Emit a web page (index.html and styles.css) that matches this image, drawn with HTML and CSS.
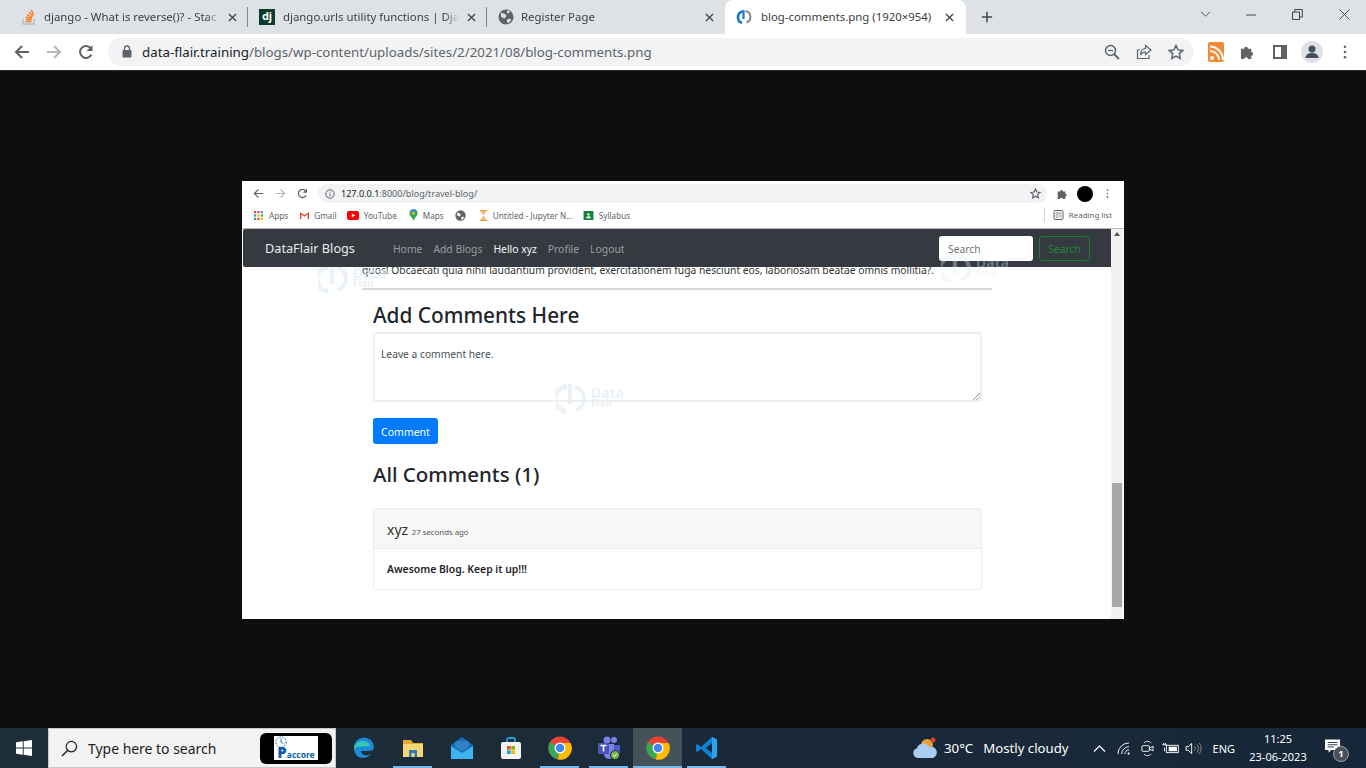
FILE: index.html
```html
<!DOCTYPE html>
<html lang="en">
<head>
<meta charset="utf-8">
<title>blog-comments.png (1920×954)</title>
<link rel="stylesheet" href="styles.css">
</head>
<body>
<div class="tabstrip">
  <div class="tab t1">
    <svg class="fav" viewBox="0 0 16 16"><path d="M2 10v5h11v-5" fill="none" stroke="#bcbbbb" stroke-width="1.4"/><path d="M4.5 12.5h6M4.6 10.3l6 .6M5 8l5.8 1.6M6 5.6l5.2 2.9M8 3l4 4.300M10.300 1l2.500 5" stroke="#f48024" stroke-width="1.400" fill="none"/></svg>
    <span class="tabtitle">django - What is reverse()? - Stac</span>
    <span class="tabx"><svg viewBox="0 0 10 10"><path d="M1 1l8 8M9 1l-8 8"/></svg></span>
  </div>
  <div class="tab t2">
    <span class="djicon">dj</span>
    <span class="tabtitle">django.urls utility functions | Djan</span>
    <span class="tabx"><svg viewBox="0 0 10 10"><path d="M1 1l8 8M9 1l-8 8"/></svg></span>
  </div>
  <div class="tab t3">
    <svg class="fav" viewBox="0 0 16 16"><circle cx="8" cy="8" r="7.500" fill="#5f6368"/><path d="M3 3.500l4 1.500 1.500 2-2 2.500-1-.2L3 7.500zM9 10.500l3.500-1 .5 2-2.500 2.500-1.500-1zM9 1.500l3 1-1.500 2-1.500-.5z" fill="#dee1e6"/></svg>
    <span class="tabtitle">Register Page</span>
    <span class="tabx"><svg viewBox="0 0 10 10"><path d="M1 1l8 8M9 1l-8 8"/></svg></span>
  </div>
  <div class="tab active">
    <svg class="fav" viewBox="0 0 16 16"><path d="M6.500 2.500A6 6 0 0 0 6 14" fill="none" stroke="#1976c8" stroke-width="2.600"/><path d="M7.500 1v9" stroke="#1976c8" stroke-width="2.200"/><path d="M9.500 2a6 6 0 0 1 1 11.500" fill="none" stroke="#8a8f96" stroke-width="2.200"/></svg>
    <span class="tabtitle">blog-comments.png (1920×954)</span>
    <span class="tabx"><svg viewBox="0 0 10 10"><path d="M1 1l8 8M9 1l-8 8"/></svg></span>
  </div>
  <svg class="newtab" viewBox="0 0 14 14"><path d="M7 1v12M1 7h12"/></svg>
  <div class="winctl">
    <svg class="wc-chev" viewBox="0 0 12 8"><path d="M1 1l5 5 5-5"/></svg>
    <svg class="wc-min" viewBox="0 0 12 2"><path d="M0 1h11"/></svg>
    <svg class="wc-max" viewBox="0 0 11 11"><path d="M.5 3h7v7.500h-7zM2.800 3V.5h7.500v7.500H7.500"/></svg>
    <svg class="wc-close" viewBox="0 0 12 12"><path d="M.5.5l11 11M11.500.5l-11 11"/></svg>
  </div>
</div>
<div class="toolbar">
  <svg class="nav-ic" viewBox="0 0 16 16"><path d="M15 8H2M8 2L2 8l6 6" fill="none" stroke="#5f6368" stroke-width="2"/></svg>
  <svg class="nav-ic" viewBox="0 0 16 16"><path d="M1 8h13M8 2l6 6-6 6" fill="none" stroke="#b4b7ba" stroke-width="2"/></svg>
  <svg class="nav-ic" viewBox="0 0 16 16"><path d="M13.500 10.500A6 6 0 1 1 13 4.500" fill="none" stroke="#5f6368" stroke-width="2"/><path d="M14.500 1v6h-6z" fill="#5f6368"/></svg>
  <div class="omni">
    <svg class="lock" viewBox="0 0 10 13"><path d="M2.500 5V3.500a2.500 2.500 0 0 1 5 0V5" fill="none" stroke="#5f6368" stroke-width="1.300"/><rect x="0.500" y="5" width="9" height="7.500" rx="1" fill="#5f6368"/></svg>
    <span class="url"><b>data-flair.training</b>/blogs/wp-content/uploads/sites/2/2021/08/blog-comments.png</span>
    <span class="omni-right">
      <svg class="ic16" viewBox="0 0 16 16"><circle cx="6.500" cy="6.500" r="5" fill="none" stroke="#5f6368" stroke-width="1.500"/><path d="M10 10l5 5" stroke="#5f6368" stroke-width="1.800"/><path d="M4 6.500h5" stroke="#5f6368" stroke-width="1.300"/></svg>
      <svg class="ic16" viewBox="0 0 16 16"><path d="M4 6H1.500v8.500H13V11" fill="none" stroke="#5f6368" stroke-width="1.200"/><path d="M9.500 1.500L15 6l-5.500 4.500V8C7 8 5.500 9 4.500 11c0-4 2-6.500 5-6.500z" fill="none" stroke="#5f6368" stroke-width="1.200"/></svg>
      <svg class="ic16" viewBox="0 0 16 16"><path d="M8 1.500l2 4.400 4.800.5-3.600 3.200 1 4.700L8 12l-4.200 2.300 1-4.700L1.200 6.400 6 5.900z" fill="none" stroke="#5f6368" stroke-width="1.500"/></svg>
    </span>
  </div>
  <span class="ext-group">
    <svg class="rss" viewBox="0 0 16 20"><rect width="16" height="20" rx="2" fill="#f08a35"/><circle cx="4" cy="16" r="2" fill="#fff"/><path d="M2 9a9 9 0 0 1 9 9M2 4.500A13.500 13.500 0 0 1 15 18" fill="none" stroke="#fff" stroke-width="2"/></svg>
    <svg class="puzzle" viewBox="0 0 16 16"><path d="M1 5h3.500a2 2 0 1 1 4 0H12v3.500a2 2 0 1 1 0 4V16H8.500a2 2 0 1 0-4 0H1z" fill="#5f6368"/></svg>
    <svg class="side" viewBox="0 0 14 14"><rect x="1" y="1" width="12" height="12" fill="none" stroke="#5f6368" stroke-width="2"/><rect x="8" y="1" width="5" height="12" fill="#5f6368"/></svg>
    <span class="avatar"><svg viewBox="0 0 22 22"><circle cx="11" cy="8" r="3.500" fill="#474f5d"/><path d="M4.500 17c0-3.500 3-5 6.500-5s6.500 1.500 6.500 5z" fill="#474f5d"/></svg></span>
    <svg class="kebab" viewBox="0 0 4 16"><circle cx="2" cy="2" r="1.500"/><circle cx="2" cy="8" r="1.500"/><circle cx="2" cy="14" r="1.500"/></svg>
  </span>
</div>
<main class="viewer">
  <div class="shot">
    <div class="in-toolbar">
      <svg class="in-nav" viewBox="0 0 16 16"><path d="M15 8H2M8 2L2 8l6 6" fill="none" stroke="#5f6368" stroke-width="1.800"/></svg>
      <svg class="in-nav" viewBox="0 0 16 16"><path d="M1 8h13M8 2l6 6-6 6" fill="none" stroke="#b4b7ba" stroke-width="1.800"/></svg>
      <svg class="in-nav" viewBox="0 0 16 16"><path d="M13.500 10.500A6 6 0 1 1 13 4.500" fill="none" stroke="#5f6368" stroke-width="1.800"/><path d="M14.500 1v6h-6z" fill="#5f6368"/></svg>
      <div class="in-omni">
        <svg class="in-info" viewBox="0 0 10 10"><circle cx="5" cy="5" r="4.200" fill="none" stroke="#5f6368"/><path d="M5 4.500V7.500M5 2.500v1" stroke="#5f6368"/></svg>
        <span class="in-url"><b>127.0.0.1</b>:8000/blog/travel-blog/</span>
        <svg class="in-star" viewBox="0 0 16 16"><path d="M8 1.500l2 4.400 4.800.5-3.600 3.200 1 4.700L8 12l-4.200 2.300 1-4.700L1.200 6.400 6 5.900z" fill="none" stroke="#5f6368" stroke-width="1.700"/></svg>
      </div>
      <svg class="in-puzzle" viewBox="0 0 16 16"><path d="M1 5h3.500a2 2 0 1 1 4 0H12v3.500a2 2 0 1 1 0 4V16H8.500a2 2 0 1 0-4 0H1z" fill="#5f6368"/></svg>
      <span class="in-avatar"></span>
      <svg class="in-kebab" viewBox="0 0 4 16"><circle cx="2" cy="2" r="1.500"/><circle cx="2" cy="8" r="1.500"/><circle cx="2" cy="14" r="1.500"/></svg>
    </div>
    <div class="bookmarks">
      <span class="bm bm-apps"><svg class="bm-ic" viewBox="0 0 9 9"><g fill="#ea4335"><rect width="2.200" height="2.200"/><rect x="3.400" width="2.200" height="2.200"/></g><rect x="6.800" width="2.200" height="2.200" fill="#4285f4"/><rect y="3.400" width="2.200" height="2.200" fill="#4285f4"/><rect x="3.400" y="3.400" width="2.200" height="2.200" fill="#fbbc05"/><rect x="6.800" y="3.400" width="2.200" height="2.200" fill="#34a853"/><rect y="6.800" width="2.200" height="2.200" fill="#34a853"/><rect x="3.400" y="6.800" width="2.200" height="2.200" fill="#ea4335"/><rect x="6.800" y="6.800" width="2.200" height="2.200" fill="#fbbc05"/></svg>Apps</span>
      <span class="bm bm-gmail"><svg class="bm-ic" viewBox="0 0 10 8"><path d="M.8 8V1.500L5 4.500l4.200-3V8" fill="none" stroke="#ea4335" stroke-width="1.500"/></svg>Gmail</span>
      <span class="bm bm-yt"><svg class="bm-ic wide" viewBox="0 0 12 9"><rect width="12" height="9" rx="2" fill="#f00"/><path d="M4.800 2.500v4l3.400-2z" fill="#fff"/></svg>YouTube</span>
      <span class="bm bm-maps"><svg class="bm-ic" viewBox="0 0 10 13"><path d="M5 0a4.500 4.500 0 0 1 4.500 4.500C9.500 7.500 6 9.500 5 13 4 9.500.5 7.500.5 4.500A4.500 4.500 0 0 1 5 0z" fill="#34a853"/><path d="M1 3a4.500 4.500 0 0 1 7-2L5 4.500z" fill="#4285f4"/><circle cx="5" cy="4.500" r="1.500" fill="#fbbc05"/></svg>Maps</span>
      <span class="bm bm-globe"><svg class="bm-ic" viewBox="0 0 16 16"><circle cx="8" cy="8" r="7.500" fill="#5f6368"/><path d="M3 3.500l4 1.500 1.500 2-2 2.500-1-.2L3 7.500zM9 10.500l3.500-1 .5 2-2.500 2.500-1.500-1z" fill="#fff"/></svg></span>
      <span class="bm bm-jup"><svg class="bm-ic" viewBox="0 0 10 12"><path d="M1 .7h8M1 11.300h8" stroke="#f39a3c" stroke-width="1.400"/><path d="M2 1h6L5 6l3 5H2l3-5z" fill="#f7b267"/></svg>Untitled - Jupyter N...</span>
      <span class="bm bm-syl"><svg class="bm-ic" viewBox="0 0 11 10"><rect width="11" height="10" fill="#188038"/><circle cx="5.500" cy="3.800" r="1.300" fill="#fff"/><path d="M2.800 8c0-1.500 1.200-2.200 2.700-2.200S8.200 6.500 8.200 8z" fill="#fff"/></svg>Syllabus</span>
      <span class="bm bm-read"><svg class="bm-ic" viewBox="0 0 10 10"><rect x=".5" y=".5" width="9" height="9" rx="1" fill="none" stroke="#5f6368"/><path d="M2 3h6M2 5h3M6 5h2M2 7h3M6 7h2" stroke="#5f6368" stroke-width=".8"/></svg>Reading list</span>
    </div>
    <div class="site">
      <div class="site-main">
        <nav class="navbar">
          <span class="brand">DataFlair Blogs</span>
          <span class="navlinks">
            <a>Home</a><a>Add Blogs</a><a class="on">Hello xyz</a><a>Profile</a><a>Logout</a>
          </span>
          <span class="navsearch">
            <span class="searchbox">Search</span>
            <span class="searchbtn">Search</span>
          </span>
        </nav>
        <div class="content">
          <p class="clipped">quos! Obcaecati quia nihil laudantium provident, exercitationem fuga nesciunt eos, laboriosam beatae omnis mollitia?.</p>
          <div class="rule"></div>
          <section class="col">
            <h2 class="h-add">Add Comments Here</h2>
            <div class="textarea">Leave a comment here.<svg class="grip" viewBox="0 0 8 8"><path d="M1 8l7-7M4.500 8L8 4.500" stroke="#777" stroke-width=".8"/></svg></div>
            <span class="btn">Comment</span>
            <h2 class="h-all">All Comments (1)</h2>
            <div class="card">
              <div class="card-head"><span class="who">xyz</span> <small>27 seconds ago</small></div>
              <div class="card-body">Awesome Blog. Keep it up!!!</div>
            </div>
          </section>
        </div>
        <div class="wm wm-a"><svg viewBox="0 0 30 34"><path d="M11 6A12 12 0 0 0 10 30" fill="none" stroke="currentColor" stroke-width="5"/><path d="M14 3v20" stroke="currentColor" stroke-width="4"/><path d="M19 6a12 12 0 0 1 1 23" fill="none" stroke="currentColor" stroke-width="4"/></svg><span class="wm-txt"><i>Data</i><i>Flair</i></span></div>
        <div class="wm wm-b"><svg viewBox="0 0 30 34"><path d="M11 6A12 12 0 0 0 10 30" fill="none" stroke="currentColor" stroke-width="5"/><path d="M14 3v20" stroke="currentColor" stroke-width="4"/><path d="M19 6a12 12 0 0 1 1 23" fill="none" stroke="currentColor" stroke-width="4"/></svg><span class="wm-txt"><i>Data</i><i>Flair</i></span></div>
        <div class="wm wm-c"><svg viewBox="0 0 30 34"><path d="M11 6A12 12 0 0 0 10 30" fill="none" stroke="currentColor" stroke-width="5"/><path d="M14 3v20" stroke="currentColor" stroke-width="4"/><path d="M19 6a12 12 0 0 1 1 23" fill="none" stroke="currentColor" stroke-width="4"/></svg><span class="wm-txt"><i>Data</i><i>Flair</i></span></div>
      </div>
      <div class="scrollbar"><span class="sb-up"></span><span class="sb-thumb"></span></div>
    </div>
  </div>
</main>
<footer class="taskbar">
  <svg class="winlogo" viewBox="0 0 16 16"><path d="M0 2.300l6.800-1v6.200H0zM7.700 1.200L16 0v7.500H7.700zM0 8.500h6.800v6.200l-6.800-1zM7.700 8.500H16V16l-8.300-1.200z" fill="#fff"/></svg>
  <div class="tsearch">
    <svg class="mag" viewBox="0 0 18 18"><circle cx="11" cy="7" r="5.500" fill="none" stroke="#222" stroke-width="1.300"/><path d="M7 11l-6 6" stroke="#222" stroke-width="1.500"/></svg>
    <span class="tsearch-txt">Type here to search</span>
    <span class="pac"><span class="pac-in"><svg class="pac-dial" viewBox="0 0 14 14"><circle cx="7" cy="7" r="6" fill="none" stroke="#0d5ea8" stroke-dasharray="2 1.200"/><path d="M7 3v4l3 2" fill="none" stroke="#0d5ea8"/></svg><b>P</b>accore</span></span>
  </div>
  <div class="apps">
    <span class="app"><svg viewBox="0 0 24 24"><path d="M2 12a10 10 0 0 1 20-1c0 3-2.500 4-5 4H9c0 3 3 5 7 4 1-.2 2-.7 3-1.300-2 3-5 4.300-8 4.300-5 0-9-4-9-10z" fill="#1a8bd8"/><path d="M2 12C3 7 7 5 11 5c4 0 7 2.500 7 5.500H8C5 10.500 3 12 2 14z" fill="#37c6b0"/></svg></span>
    <span class="app under"><svg viewBox="0 0 24 24"><path d="M2 4h8l2 3h10v14H2z" fill="#e8a92a"/><path d="M2 8h20v13H2z" fill="#f7d674"/><path d="M8 21v-7h8v7h-2.500v-4h-3v4z" fill="#2b7bc0"/></svg></span>
    <span class="app"><svg viewBox="0 0 24 24"><path d="M1 9l11-8 11 8v14H1z" fill="#0f6cbd"/><path d="M1 10l11 7 11-7v13H1z" fill="#3fb2f0"/><path d="M5 5h14v6l-7 4-7-4z" fill="#fff" opacity=".15"/></svg></span>
    <span class="app"><svg viewBox="0 0 24 24"><path d="M8 7V4a2 2 0 0 1 2-2h4a2 2 0 0 1 2 2v3" fill="none" stroke="#21a0dc" stroke-width="1.800"/><rect x="2" y="6" width="20" height="17" rx="2" fill="#f4f4f4"/><rect x="8" y="10" width="3.700" height="3.700" fill="#f25022"/><rect x="12.300" y="10" width="3.700" height="3.700" fill="#7fba00"/><rect x="8" y="14.300" width="3.700" height="3.700" fill="#00a4ef"/><rect x="12.300" y="14.300" width="3.700" height="3.700" fill="#ffb900"/></svg></span>
    <span class="app under"><svg viewBox="0 0 24 24"><use href="#chrome"/></svg></span>
    <span class="app under"><svg viewBox="0 0 24 24"><circle cx="17" cy="4" r="3" fill="#7b83eb"/><circle cx="10" cy="4" r="3.500" fill="#7b83eb"/><path d="M13 9h10v8a4 4 0 0 1-8 0z" fill="#5059c9"/><path d="M7 8h10v10a5 5 0 0 1-10 0z" fill="#7b83eb"/><rect x="1" y="7" width="11" height="11" rx="1" fill="#4b53bc"/><path d="M3.500 9.500h6M6.500 9.500v6" stroke="#fff" stroke-width="1.500"/><circle cx="18" cy="19" r="4.500" fill="#7ab648" stroke="#1b2a35"/><path d="M16 19l1.500 1.500 2.500-3" fill="none" stroke="#fff"/></svg></span>
    <span class="app cur under"><svg viewBox="0 0 24 24"><use href="#chrome"/></svg></span>
    <span class="app under"><svg viewBox="0 0 24 24"><path d="M17 1l5 2.500v17L17 23 6 13l-3.500 3L1 15v-6l1.500-1L6 11zM17 7l-6 5 6 5z" fill="#0e7fd1"/><path d="M17 1l5 2.500v17L17 23z" fill="#2ba5ee"/></svg></span>
  </div>
  <div class="tray">
    <svg class="weather" viewBox="0 0 26 24"><circle cx="15" cy="9" r="6" fill="#e9a23b"/><circle cx="21" cy="4" r="2.500" fill="#d8432f"/><path d="M6 22a5 5 0 0 1-1-9.800A6.500 6.500 0 0 1 17 11a5.500 5.500 0 0 1 4 11z" fill="#a8cdf0"/></svg>
    <span class="temp">30°C</span>
    <span class="cond">Mostly cloudy</span>
    <svg class="tr-chev" viewBox="0 0 12 7"><path d="M.5 6.500L6 1l5.500 5.500"/></svg>
    <svg class="tr-wifi" viewBox="0 0 14 14"><path d="M1 13A12 12 0 0 1 13 1M5 13A8 8 0 0 1 13 5" fill="none" stroke="#fff"/><path d="M8.500 13A4.500 4.500 0 0 1 13 8.500" fill="none" stroke="#fff"/><circle cx="12.500" cy="12.500" r="1.200" fill="#fff"/></svg>
    <svg class="tr-meet" viewBox="0 0 14 18"><path d="M3 3a6 6 0 0 1 8 0M3 15a6 6 0 0 0 8 0" fill="none" stroke="#ddd"/><rect x="1" y="6" width="8" height="6" rx="1" fill="none" stroke="#fff"/><path d="M9 8.500l4-2v5l-4-2" fill="none" stroke="#fff"/></svg>
    <svg class="tr-batt" viewBox="0 0 18 12"><rect x="4.500" y="2.500" width="13" height="8" fill="none" stroke="#fff"/><rect x="7" y="4" width="9" height="5" fill="#fff"/><path d="M0 2h5M1.500 0v2M3.500 0v2M2.500 5v4" stroke="#fff"/></svg>
    <svg class="tr-vol" viewBox="0 0 18 14"><path d="M1 5h2.500L7 1.500v11L3.500 9H1z" fill="none" stroke="#fff"/><path d="M10 4.500a3.500 3.500 0 0 1 0 5M12.500 2.500a6.500 6.500 0 0 1 0 9M15 1a9 9 0 0 1 0 12" fill="none" stroke="#8a8f96"/></svg>
    <span class="eng">ENG</span>
    <span class="clock"><span>11:25</span><span>23-06-2023</span></span>
    <span class="notif"><svg viewBox="0 0 18 16"><path d="M0 0h17v12H7l-3 3v-3H0z" fill="#fff"/><path d="M3 3.500h11M3 6h11M3 8.500h7" stroke="#1b2a35"/></svg><span class="badge">1</span></span>
  </div>
</footer>
<svg class="defs" aria-hidden="true"><defs><symbol id="chrome" viewBox="0 0 24 24"><circle cx="12" cy="12" r="11.500" fill="#ea4335"/><path d="M12 12L2 6A11.500 11.500 0 0 0 10 23.300z" fill="#34a853"/><path d="M12 7h10.500A11.500 11.500 0 0 1 10 23.500L12 12z" fill="#fbbc05"/><circle cx="12" cy="12" r="5.500" fill="#fff"/><circle cx="12" cy="12" r="4.200" fill="#4285f4"/></symbol></defs></svg>
</body>
</html>
```
FILE: styles.css
```css
* { box-sizing: border-box; }
html, body { margin: 0; height: 100%; }
body {
  width: 1366px; height: 768px; overflow: hidden;
  display: flex; flex-direction: column;
  font-family: "Noto Sans", "Open Sans", sans-serif;
  background: #0e0e0e;
}
svg { display: block; flex: none; }
.defs { width: 0; height: 0; position: absolute; }

/* tab strip */
.tabstrip { height: 34px; background: #dee1e6; display: flex; align-items: center; padding-left: 8px; flex: none; }
.tab { height: 34px; display: flex; align-items: center; position: relative; flex: none; }
.t1 { width: 240px; padding: 0 11px 0 13px; }
.t2 { width: 239px; padding: 0 11px 0 11px; }
.t3 { width: 238px; padding: 0 11px 0 11px; }
.t1::after, .t2::after { content: ""; position: absolute; right: 0; top: 7px; height: 20px; width: 1px; background: #80868b; }
.active { width: 241px; background: #fff; border-radius: 8px 8px 0 0; padding: 0 12px 0 11px; }
.fav { width: 16px; height: 16px; margin-right: 7px; }
.active .fav { margin-right: 9px; }
.djicon { width: 16px; height: 16px; margin-right: 8px; background: #0c3c26; color: #fff; font-size: 11px; font-weight: 700; line-height: 14px; text-align: center; flex: none; }
.tabtitle { flex: 1; font-size: 11.400px; line-height: 16px; margin-top: -1px; color: #3c4043; white-space: nowrap; overflow: hidden; min-width: 0; -webkit-mask-image: linear-gradient(to left, transparent 0, #000 14px); mask-image: linear-gradient(to left, transparent 0, #000 14px); }
.active .tabtitle { -webkit-mask-image: none; mask-image: none; }
.tabx { width: 9px; height: 9px; margin-left: 8px; flex: none; }
.tabx svg { width: 9px; height: 9px; }
.tabx path { stroke: #45494d; stroke-width: 1.500; fill: none; }
.newtab { width: 12px; height: 12px; margin-left: 15px; }
.newtab path { stroke: #45494d; stroke-width: 1.800; fill: none; }
.winctl { margin-left: auto; display: flex; align-items: center; height: 34px; position: relative; width: 166px; flex: none; }
.winctl path { stroke: #3c4043; fill: none; stroke-width: 1; }
.wc-chev { width: 11px; height: 7px; margin-top: -5px; }
.wc-min { width: 11px; height: 2px; margin-left: 35px; margin-top: -5px; }
.wc-max { width: 11px; height: 11px; margin-left: 35px; margin-top: -5px; }
.wc-close { width: 11px; height: 11px; margin-left: 36px; margin-top: -5px; }

/* toolbar */
.toolbar { height: 37px; background: #fff; display: flex; align-items: center; padding: 0 0 1px 14px; gap: 16px; border-bottom: 1px solid #2a2a2a; flex: none; }
.nav-ic { width: 16px; height: 16px; }
.omni { width: 1086px; height: 28px; background: #f1f3f4; border-radius: 14px; display: flex; align-items: center; padding: 0 10px 0 14px; flex: none; margin-left: -2px; }
.lock { width: 10px; height: 13px; margin-right: 10px; }
.url { font-size: 13.300px; color: #5f6368; white-space: nowrap; }
.url b { font-weight: 400; color: #202124; }
.omni-right { margin-left: auto; display: flex; gap: 16px; }
.ic16 { width: 16px; height: 16px; }
.ext-group { display: flex; align-items: center; margin-left: -2px; }
.rss { width: 16px; height: 20px; }
.puzzle { width: 15px; height: 15px; margin-left: 16px; }
.side { width: 14px; height: 14px; margin-left: 18px; }
.avatar { width: 22px; height: 22px; border-radius: 50%; background: #dee1e6; margin-left: 14px; }
.avatar svg { width: 22px; height: 22px; }
.kebab { width: 4px; height: 14px; fill: #5f6368; margin-left: 20px; }

/* viewer */
.viewer { flex: 1; min-height: 0; display: flex; align-items: center; justify-content: center; background: #0e0e0e; }
.shot { width: 882px; height: 438px; background: #fff; display: flex; flex-direction: column; overflow: hidden; font-size: 11px; }
.in-toolbar { height: 26px; display: flex; align-items: center; padding-left: 11px; flex: none; }
.in-nav { width: 11px; height: 11px; margin-right: 11px; }
.in-nav:nth-child(3) { margin-right: 10px; }
.in-omni { width: 729px; height: 19px; background: #f1f3f4; border-radius: 10px; display: flex; align-items: center; padding: 0 6px 0 7px; }
.in-info { width: 10px; height: 10px; margin-right: 6px; }
.in-url { font-size: 9.050px; color: #5f6368; white-space: nowrap; }
.in-url b { font-weight: 400; color: #202124; }
.in-star { width: 11px; height: 11px; margin-left: auto; }
.in-puzzle { width: 11px; height: 11px; margin-left: 10px; }
.in-avatar { width: 16px; height: 16px; border-radius: 50%; background: #000; margin-left: 9px; }
.in-kebab { width: 3px; height: 9px; fill: #5f6368; margin-left: 13px; }
.bookmarks { height: 22px; display: flex; align-items: center; padding: 0 0 4px 12px; font-size: 8.200px; color: #5f6368; flex: none; border-bottom: 1px solid #b8b8b8; white-space: nowrap; }
.bm { display: flex; align-items: center; }
.bm-ic { width: 9px; height: 9px; margin-right: 5px; }
.bm-ic.wide { width: 12px; }
.bm-apps .bm-ic { margin-right: 6px; }
.bm-gmail { margin-left: 12px; }
.bm-yt { margin-left: 10px; }
.bm-maps { margin-left: 12px; }
.bm-maps .bm-ic { height: 12px; }
.bm-globe { margin-left: 11px; }
.bm-globe .bm-ic { width: 11px; height: 11px; margin: 0; }
.bm-jup { margin-left: 13px; }
.bm-jup .bm-ic { width: 9px; height: 11px; }
.bm-syl { margin-left: 10px; }
.bm-syl .bm-ic { width: 11px; }
.bm-read { margin-left: auto; margin-right: 12px; border-left: 1px solid #d5d5d5; padding-left: 8px; height: 14px; font-size: 7.900px; }
.bm-read .bm-ic { width: 11px; height: 10px; margin-right: 5px; }

/* inside page */
.site { flex: 1; min-height: 0; display: flex; padding: 0 1px; }
.site-main { flex: 1; min-width: 0; display: flex; flex-direction: column; position: relative; overflow: hidden; }
.navbar { height: 38px; background: #343a40; display: flex; align-items: center; padding: 1px 21px 0 22px; flex: none; position: relative; z-index: 2; border-radius: 2px 0 0 2px; }
.brand { font-size: 12.700px; color: #e9ecef; margin-right: 38px; white-space: nowrap; }
.navlinks { display: flex; gap: 11px; font-size: 10.350px; margin-top: 1px; color: #9a9da0; white-space: nowrap; }
.navlinks .on { color: #f4f4f4; }
.navsearch { margin-left: auto; display: flex; gap: 6px; font-size: 10.300px; }
.searchbox { width: 94px; height: 25px; background: #fff; border-radius: 3px; color: #6c757d; padding-left: 9px; line-height: 26px; }
.searchbtn { width: 51px; height: 25px; border: 1px solid #1e7e34; border-radius: 3px; color: #23863b; text-align: center; line-height: 24px; }
.content { flex: 1; min-height: 0; padding-left: 119px; color: #212529; }
.clipped { margin: -5px 0 0; font-size: 10.300px; line-height: 16px; white-space: nowrap; color: #333; }
.rule { width: 630px; height: 2px; background: #d8d8d8; margin-top: 10px; }
.col { width: 609px; margin-left: 11px; }
.h-add { font-size: 20.800px; font-weight: 500; line-height: 28px; margin: 11px 0 0; }
.textarea { height: 70px; margin-top: 3px; border: 2px solid #f0f0f0; border-radius: 3px; font-size: 10.250px; padding: 13px 6px; color: #495057; position: relative; }
.grip { position: absolute; right: 0; bottom: 0; width: 8px; height: 8px; }
.btn { display: block; width: 65px; height: 26px; margin-top: 16px; background: #007bff; color: #fff; border-radius: 3px; font-size: 10.500px; line-height: 28px; text-align: center; }
.h-all { font-size: 20.500px; font-weight: 500; line-height: 28px; margin: 16px 0 0; }
.card { margin-top: 20px; border: 1px solid #ececec; border-radius: 3px; height: 82px; }
.card-head { height: 40px; background: #f7f7f7; border-bottom: 1px solid #ececec; padding: 11px 13px 0; line-height: 20px; font-size: 14px; white-space: nowrap; color: #333; }
.who { font-size: 14px; }
.card-head small { font-size: 7.800px; color: #555; }
.card-body { padding: 13px 13px; font-size: 10.400px; font-weight: 600; line-height: 15px; }
.wm { position: absolute; display: flex; align-items: center; color: #dfedf6; opacity: .7; }
.wm svg { width: 30px; height: 34px; }
.wm-txt { display: flex; flex-direction: column; font-weight: 700; margin-left: 5px; }
.wm-txt i { font-style: normal; font-size: 14px; line-height: 11px; }
.wm-txt i + i { font-size: 10px; color: #e6e9ec; }
.wm-a { left: 75px; top: 32px; z-index: 1; }
.wm-b { left: 313px; top: 152px; }
.wm-c { left: 698px; top: 22px; z-index: 3; opacity: .35; }
.scrollbar { width: 12px; background: #f1f1f1; position: relative; flex: none; }
.sb-up { position: absolute; top: 3px; left: 3px; border: 3px solid transparent; border-top: 0; border-bottom: 4px solid #505050; }
.sb-thumb { position: absolute; top: 254px; left: 1px; width: 10px; height: 124px; background: #a8a8a8; }

/* taskbar */
.taskbar { height: 40px; background: linear-gradient(90deg, #1d2f38, #1b2a38 50%, #162739); display: flex; align-items: center; flex: none; position: relative; }
.winlogo { width: 16px; height: 16px; margin-left: 16px; }
.tsearch { width: 288px; height: 40px; margin-left: 16px; background: #f2f2f2; border: 1px solid #c8c8c8; display: flex; align-items: center; padding-left: 12px; flex: none; }
.mag { width: 17px; height: 17px; margin-right: 10px; }
.tsearch-txt { font-size: 13.950px; color: #222; white-space: nowrap; }
.pac { width: 72px; height: 31px; background: #000; border-radius: 6px; margin-left: auto; margin-right: 3px; display: flex; align-items: center; justify-content: center; }
.pac-in { width: 44px; height: 24px; background: #fff; color: #0d5ea8; font-size: 8.500px; font-weight: 700; display: flex; align-items: flex-end; justify-content: center; line-height: 10px; white-space: nowrap; position: relative; }
.pac-in b { font-size: 15px; line-height: 16px; }
.pac-dial { position: absolute; left: 1px; top: 0; width: 12px; height: 12px; }
.apps { display: flex; margin-left: 3px; }
.app { width: 49px; height: 40px; display: flex; align-items: center; justify-content: center; position: relative; flex: none; }
.app svg { width: 24px; height: 24px; }
.app.cur { background: #46525a; }
.under::after { content: ""; position: absolute; left: 5px; right: 5px; bottom: 0; height: 2px; background: #76b9ed; }
.app.cur::after { left: 0; right: 0; }
.tray { margin-left: auto; display: flex; align-items: center; color: #fff; height: 40px; flex: none; }
.weather { width: 26px; height: 24px; }
.temp { font-size: 13.300px; margin-left: 6px; white-space: nowrap; }
.cond { font-size: 13.200px; margin-left: 10px; white-space: nowrap; margin-right: 24px; }
.tr-chev { width: 13px; height: 7px; }
.tr-chev path { stroke: #fff; fill: none; stroke-width: 1.200; }
.tr-wifi { width: 13px; height: 13px; margin-left: 11px; }
.tr-meet { width: 13px; height: 17px; margin-left: 11px; }
.tr-batt { width: 17px; height: 11px; margin-left: 8px; }
.tr-vol { width: 17px; height: 13px; margin-left: 6px; }
.eng { font-size: 11px; margin-left: 11px; white-space: nowrap; }
.clock { display: flex; flex-direction: column; align-items: center; font-size: 11px; line-height: 18px; margin-left: 13px; white-space: nowrap; width: 60px; }
.notif { width: 32px; height: 40px; margin-left: 8px; margin-right: 18px; position: relative; display: flex; align-items: center; padding-left: 9px; }
.notif svg { width: 16px; height: 15px; margin-top: -4px; }
.badge { position: absolute; left: 17px; top: 18px; width: 16px; height: 16px; border-radius: 50%; background: #4a5158; border: 1px solid #9aa0a6; color: #fff; font-size: 9.500px; font-weight: 700; line-height: 14px; text-align: center; }
```
